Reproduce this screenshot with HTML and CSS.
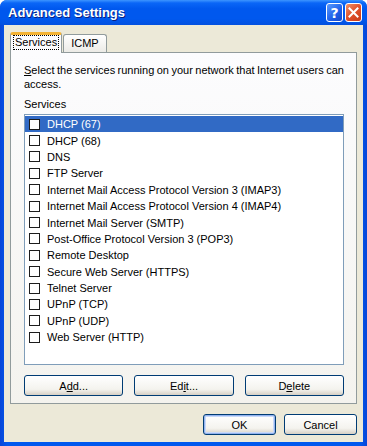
FILE: index.html
```html
<!DOCTYPE html>
<html lang="en">
<head>
  <meta charset="UTF-8">
  <title>Advanced Settings</title>
  <link rel="stylesheet" href="styles.css">
</head>
<body>
  <div class="window">
    <div class="titlebar">
      <span class="title">Advanced Settings</span>
      <div class="caption-btns">
        <span class="cap-btn help">?</span>
        <span class="cap-btn close">
          <svg width="11" height="11" viewBox="0 0 11 11"><path d="M1.5 1.5 L9.5 9.5 M9.5 1.5 L1.5 9.5" stroke="#fff" stroke-width="2" stroke-linecap="square"/></svg>
        </span>
      </div>
    </div>
    <div class="client">
      <div class="tabs">
        <div class="tab active"><span class="focus">Services</span></div>
        <div class="tab">ICMP</div>
      </div>
      <div class="panel">
        <p class="desc">Select the services running on your network that Internet users can access.</p>
        <div class="label">Services</div>
        <div class="list" id="list"></div>
        <div class="list-btns">
          <button class="btn">A<span class="mn">d</span>d...</button>
          <button class="btn">Ed<span class="mn">i</span>t...</button>
          <button class="btn">D<span class="mn">e</span>lete</button>
        </div>
      </div>
      <div class="dialog-btns">
        <button class="btn default">OK</button>
        <button class="btn">Cancel</button>
      </div>
    </div>
  </div>
  <script>
    const services = [
      'DHCP (67)', 'DHCP (68)', 'DNS', 'FTP Server',
      'Internet Mail Access Protocol Version 3 (IMAP3)',
      'Internet Mail Access Protocol Version 4 (IMAP4)',
      'Internet Mail Server (SMTP)', 'Post-Office Protocol Version 3 (POP3)',
      'Remote Desktop', 'Secure Web Server (HTTPS)', 'Telnet Server',
      'UPnP (TCP)', 'UPnP (UDP)', 'Web Server (HTTP)'
    ]
    const list = document.getElementById('list')
    services.forEach((name, i) => {
      const row = document.createElement('div')
      row.className = i === 0 ? 'row selected' : 'row'
      row.innerHTML = `<span class="check"></span><span class="name">${name}</span>`
      list.appendChild(row)
    })
  </script>
</body>
</html>
```

FILE: styles.css
```css
body {
  margin: 0;
  font-family: 'Liberation Sans', Arial, sans-serif;
  font-size: 11px;
  color: #000;
  background: #fff;
}
.window {
  width: 367px;
  height: 446px;
  background: linear-gradient(to right, #0846d8, #0058ee 2%, #0058ee 98%, #0846d8);
  border-radius: 7px 7px 0 0;
  display: flex;
  flex-direction: column;
  overflow: hidden;
}
.titlebar {
  height: 25px;
  flex-shrink: 0;
  display: flex;
  align-items: center;
  justify-content: space-between;
  padding: 0 5px 0 8px;
  background: linear-gradient(to bottom, #3d95ff 0%, #0a66f7 12%, #0058ee 35%, #0058ee 75%, #0350df 100%);
}
.title {
  font-weight: bold;
  font-size: 13px;
  color: #fff;
  text-shadow: 1px 1px 0 #0a1f80;
}
.caption-btns {
  display: flex;
  gap: 2px;
}
.cap-btn {
  width: 17px;
  height: 19px;
  box-sizing: border-box;
  border: 1px solid #fff;
  border-radius: 3px;
  display: flex;
  align-items: center;
  justify-content: center;
  color: #fff;
}
.help {
  background: linear-gradient(135deg, #5a9bff, #1d5ee8 60%, #1848c8);
  font-family: 'DejaVu Sans', sans-serif;
  font-weight: bold;
  font-size: 14px;
}
.close {
  background: linear-gradient(135deg, #f0926a, #e0502a 50%, #c63a18);
}
.client {
  flex: 1;
  margin: 0 4px 4px 4px;
  background: #ece9d8;
  padding: 7px 6px 0 6px;
  display: flex;
  flex-direction: column;
}
.tabs {
  display: flex;
  align-items: flex-end;
  height: 20px;
  position: relative;
  z-index: 1;
}
.tab {
  height: 18px;
  box-sizing: border-box;
  border: 1px solid #919b9c;
  border-bottom: none;
  border-radius: 3px 3px 0 0;
  background: linear-gradient(to bottom, #fff, #ecebe6);
  padding: 2px 7px 0;
  margin-left: 1px;
}
.tab.active {
  height: 21px;
  margin-bottom: -1px;
  margin-left: 0;
  border-top: 3px solid #f4b335;
  background: #fcfcfe;
  padding: 0 2px;
}
.focus {
  display: inline-block;
  border: 1px dotted #000;
  padding: 0 1px;
  line-height: 13px;
}
.mn {
  text-decoration: underline;
}
.panel {
  height: 352px;
  box-sizing: border-box;
  border: 1px solid #919b9c;
  background: linear-gradient(to bottom, #fcfcfe, #f4f3ee);
  padding: 10px 12px 0 13px;
}
.desc {
  margin: 0 -6px 0 0;
  line-height: 14px;
  word-spacing: -0.6px;
}
.desc::first-letter {
  text-decoration: underline;
}
.label {
  margin-top: 7px;
  line-height: 13px;
}
.list {
  margin-top: 3px;
  height: 251px;
  box-sizing: border-box;
  border: 1px solid #7f9db9;
  background: #fff;
  padding-top: 1px;
}
.row {
  height: 16.4px;
  display: flex;
  align-items: center;
  padding-left: 4px;
}
.row.selected {
  background: #316ac5;
  color: #fff;
}
.check {
  width: 11px;
  height: 11px;
  box-sizing: border-box;
  border: 1px solid #1c1c1c;
  background: #fff;
  margin-right: 7px;
  flex-shrink: 0;
}
.list-btns {
  display: grid;
  grid-template-columns: repeat(3, 1fr);
  gap: 11px;
  margin-top: 10px;
}
.btn {
  height: 21px;
  font-family: inherit;
  font-size: 11px;
  color: #000;
  border: 1px solid #003c74;
  border-radius: 3px;
  background: linear-gradient(to bottom, #fff, #f4f3ee 70%, #d6d0c5);
  padding: 0;
}
.dialog-btns {
  display: flex;
  justify-content: flex-end;
  gap: 8px;
  margin-top: 10px;
}
.dialog-btns .btn {
  width: 73px;
}
.btn.default {
  box-shadow: inset 0 0 0 1px #93b3ef, inset 0 0 0 2px #c8d9f8;
}
```
